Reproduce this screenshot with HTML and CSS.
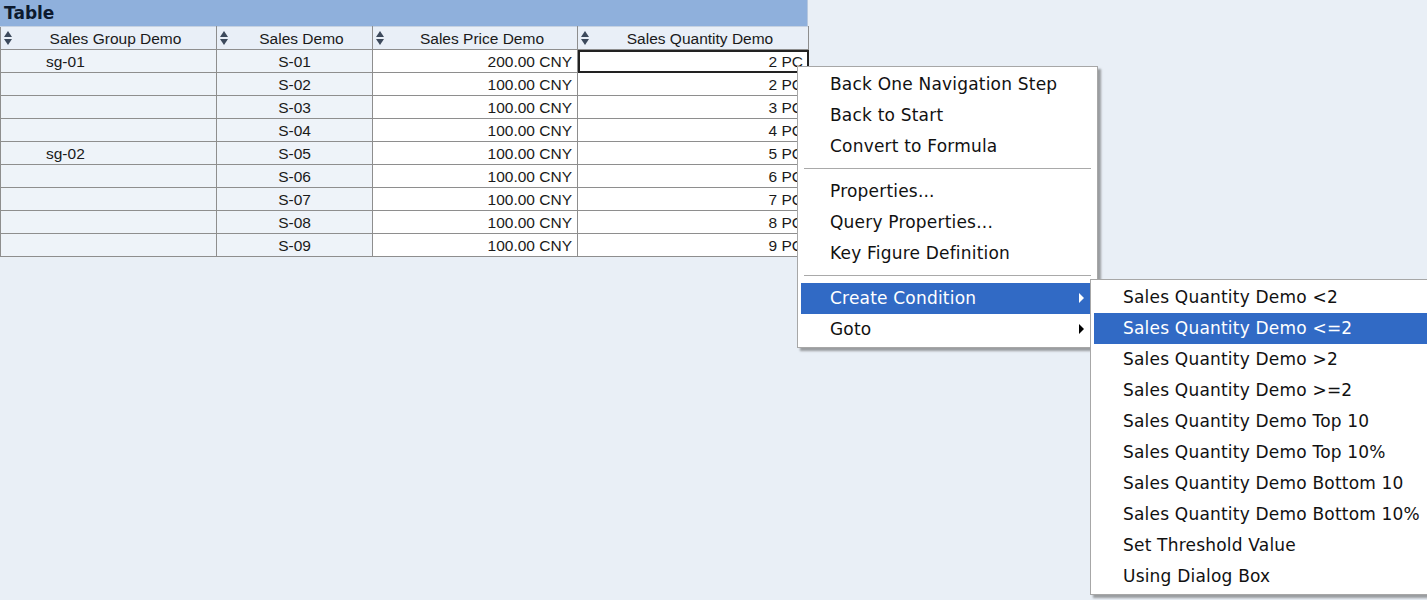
FILE: index.html
```html
<!DOCTYPE html>
<html>
<head>
<meta charset="utf-8">
<link rel="stylesheet" href="styles.css">
</head>
<body>
<div class="page">
  <div class="panel">
    <div class="title">Table</div>
    <table class="grid">
      <colgroup>
        <col class="c1"><col class="c2"><col class="c3"><col class="c4">
      </colgroup>
      <thead>
        <tr>
          <th><span class="sort"></span>Sales Group Demo</th>
          <th><span class="sort"></span>Sales Demo</th>
          <th><span class="sort"></span>Sales Price Demo</th>
          <th><span class="sort"></span>Sales Quantity Demo</th>
        </tr>
      </thead>
      <tbody>
        <tr><td class="grp">sg-01</td><td class="key">S-01</td><td class="num">200.00 CNY</td><td class="num sel">2 PC</td></tr>
        <tr><td class="grp"></td><td class="key">S-02</td><td class="num">100.00 CNY</td><td class="num">2 PC</td></tr>
        <tr><td class="grp"></td><td class="key">S-03</td><td class="num">100.00 CNY</td><td class="num">3 PC</td></tr>
        <tr><td class="grp"></td><td class="key">S-04</td><td class="num">100.00 CNY</td><td class="num">4 PC</td></tr>
        <tr><td class="grp">sg-02</td><td class="key">S-05</td><td class="num">100.00 CNY</td><td class="num">5 PC</td></tr>
        <tr><td class="grp"></td><td class="key">S-06</td><td class="num">100.00 CNY</td><td class="num">6 PC</td></tr>
        <tr><td class="grp"></td><td class="key">S-07</td><td class="num">100.00 CNY</td><td class="num">7 PC</td></tr>
        <tr><td class="grp"></td><td class="key">S-08</td><td class="num">100.00 CNY</td><td class="num">8 PC</td></tr>
        <tr><td class="grp"></td><td class="key">S-09</td><td class="num">100.00 CNY</td><td class="num">9 PC</td></tr>
      </tbody>
    </table>
  </div>

  <div class="menu main-menu">
    <div class="item">Back One Navigation Step</div>
    <div class="item">Back to Start</div>
    <div class="item">Convert to Formula</div>
    <div class="sep"></div>
    <div class="item">Properties...</div>
    <div class="item">Query Properties...</div>
    <div class="item">Key Figure Definition</div>
    <div class="sep"></div>
    <div class="item active sub">Create Condition</div>
    <div class="item sub">Goto</div>
  </div>

  <div class="menu sub-menu">
    <div class="item">Sales Quantity Demo &lt;2</div>
    <div class="item active">Sales Quantity Demo &lt;=2</div>
    <div class="item">Sales Quantity Demo &gt;2</div>
    <div class="item">Sales Quantity Demo &gt;=2</div>
    <div class="item">Sales Quantity Demo Top 10</div>
    <div class="item">Sales Quantity Demo Top 10%</div>
    <div class="item">Sales Quantity Demo Bottom 10</div>
    <div class="item">Sales Quantity Demo Bottom 10%</div>
    <div class="item">Set Threshold Value</div>
    <div class="item">Using Dialog Box</div>
  </div>
</div>
</body>
</html>
```

FILE: styles.css
```css
html, body {
  margin: 0;
  padding: 0;
  background: #e9eff6;
  height: 100%;
  overflow: hidden;
}
.page {
  position: relative;
  width: 1427px;
  height: 600px;
}
.panel {
  width: 808px;
  font-family: "Liberation Sans", Arial, sans-serif;
}
.title {
  height: 26px;
  background: #8fb0dc;
  color: #0d1a2e;
  font-family: "DejaVu Sans", Verdana, sans-serif;
  font-weight: bold;
  font-size: 17px;
  line-height: 26px;
  padding-left: 4px;
  box-sizing: border-box;
  border-right: 1px solid #b7c8df;
}
.grid {
  border-collapse: collapse;
  table-layout: fixed;
  width: 808px;
  font-size: 15.5px;
  color: #1a1a1a;
}
.c1 { width: 216px; }
.c2 { width: 156px; }
.c3 { width: 205px; }
.c4 { width: 231px; }
.grid th, .grid td {
  border: 1px solid #8e8e8e;
  height: 23px;
  padding: 0;
  box-sizing: border-box;
  white-space: nowrap;
  overflow: hidden;
  line-height: 21px;
}
.grid th {
  height: 23px;
  background: #e9eff7;
  font-weight: normal;
  text-align: center;
  position: relative;
  padding-left: 14px;
  border-top: 1px solid #c6d2e2;
}
.sort {
  position: absolute;
  left: 3px;
  top: 3px;
  width: 8px;
  height: 16px;
}
.sort::before, .sort::after {
  content: "";
  position: absolute;
  left: 0;
  border-left: 4px solid transparent;
  border-right: 4px solid transparent;
}
.sort::before {
  top: 1px;
  border-bottom: 6px solid #3d4a5c;
}
.sort::after {
  bottom: 1px;
  border-top: 6px solid #3d4a5c;
}
.grp {
  background: #eef3f9;
  padding-left: 45px !important;
}
.key {
  background: #eef3f9;
  text-align: center;
}
.num {
  background: #ffffff;
  text-align: right;
  padding-right: 5px !important;
}
.grid td.sel {
  outline: 2px solid #222;
  outline-offset: -2px;
}

.menu {
  position: absolute;
  background: #ffffff;
  border: 1px solid #a7a7a7;
  box-shadow: 3px 3px 2px rgba(90, 90, 90, 0.55);
  font-family: "DejaVu Sans", Verdana, sans-serif;
  font-size: 17px;
  letter-spacing: 0.2px;
  color: #111;
  padding: 2px 3px;
  box-sizing: border-box;
}
.main-menu {
  left: 797px;
  top: 66px;
  width: 301px;
}
.sub-menu {
  left: 1090px;
  top: 279px;
  width: 345px;
  padding-right: 0;
}
.item {
  height: 31px;
  line-height: 31px;
  padding-left: 29px;
  position: relative;
  white-space: nowrap;
}
.item.active {
  background: #316ac5;
  color: #ffffff;
}
.item.sub::after {
  content: "";
  position: absolute;
  right: 10px;
  top: 10px;
  border-top: 5px solid transparent;
  border-bottom: 5px solid transparent;
  border-left: 5px solid #000;
}
.item.sub.active::after {
  border-left-color: #fff;
}
.sep {
  height: 1px;
  background: #a9a9a9;
  margin: 6px 3px 7px 3px;
}
```
